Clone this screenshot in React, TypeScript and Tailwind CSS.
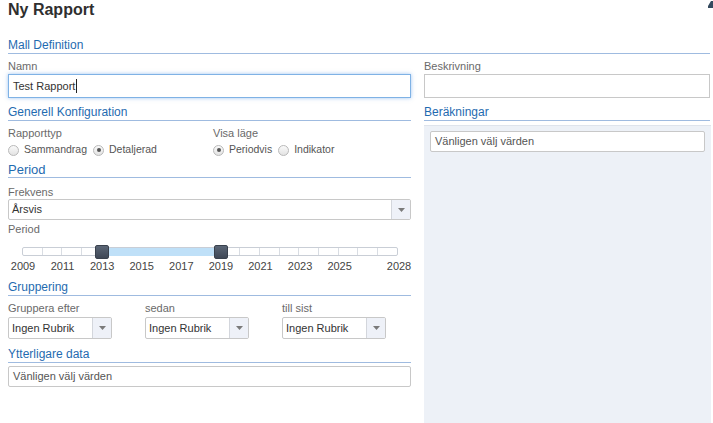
import React from "react";

const YEARS_START = 2009;
const YEARS_END = 2028;
const TRACK_W = 376;
const STEP = TRACK_W / (YEARS_END - YEARS_START);
const yearX = (y: number) => 14 + (y - YEARS_START) * STEP;

function Heading({ children, className = "" }: { children: React.ReactNode; className?: string }) {
  return (
    <div className={`h-[16px] text-[12px] leading-[15px] text-[#1f6bb0] border-b border-[#9fbbe0] ${className}`}>
      {children}
    </div>
  );
}

function Label({ children, className = "" }: { children: React.ReactNode; className?: string }) {
  return <div className={`h-[13px] text-[11px] leading-[13px] text-[#6a6a6a] ${className}`}>{children}</div>;
}

function Arrow() {
  return (
    <div className="w-[19px] self-stretch bg-[#eef1f8] border-l border-[#d3d6dc] flex items-center justify-center">
      <svg width="7" height="4" viewBox="0 0 7 4">
        <path d="M0 0 H7 L3.5 4 Z" fill="#7a7a7a" />
      </svg>
    </div>
  );
}

function Select({ value, className = "" }: { value: string; className?: string }) {
  return (
    <div className={`flex items-center bg-white border border-[#c8c8c8] rounded-[2px] overflow-hidden ${className}`}>
      <div className="flex-1 pl-[3px] text-[11px] text-[#333] truncate">{value}</div>
      <Arrow />
    </div>
  );
}

function Radio({ checked, label }: { checked?: boolean; label: string }) {
  return (
    <div className="flex items-center gap-[5px]">
      <div className="w-[11px] h-[11px] rounded-full border border-[#b9b9b9] bg-gradient-to-b from-[#fafafa] to-[#e3e3e3] flex items-center justify-center">
        {checked && <div className="w-[4px] h-[4px] rounded-full bg-[#555]" />}
      </div>
      <span className="text-[10.5px] text-[#555]">{label}</span>
    </div>
  );
}

export default function App() {
  const from = 2013;
  const to = 2019;
  const cells = Array.from({ length: YEARS_END - YEARS_START });
  const labels = [2009, 2011, 2013, 2015, 2017, 2019, 2021, 2023, 2025, 2028];

  return (
    <div
      className="w-[713px] h-[423px] overflow-hidden bg-white relative flex flex-col pl-[8px] pr-[3px]"
      style={{ fontFamily: '"Liberation Sans", Arial, sans-serif' }}
    >
      <div className="h-[20px] text-[16px] leading-[20px] font-bold text-[#2f2f2f]">Ny Rapport</div>
      <svg className="absolute right-0 top-[1px]" width="5" height="8" viewBox="0 0 5 8">
        <path d="M3 0 H5 V7 H0 V5 Z" fill="#34495e" />
      </svg>

      <Heading className="mt-[18px]">Mall Definition</Heading>

      <div className="flex-1 flex gap-[13px] min-h-0">
        {/* Left column */}
        <div className="w-[403px] shrink-0 flex flex-col">
          <Label className="mt-[6px]">Namn</Label>
          <div className="mt-[1px] h-[24px] border border-[#7fb2e5] shadow-[0_0_4px_rgba(82,150,230,0.55)] bg-white flex items-center pl-[4px] text-[11px] text-[#333]">
            Test Rapport
            <span className="inline-block w-px h-[14px] bg-[#222] ml-[1px]" />
          </div>

          <Heading className="mt-[7px]">Generell Konfiguration</Heading>
          <div className="flex">
            <div className="w-[205px] shrink-0">
              <Label className="mt-[6px]">Rapporttyp</Label>
              <div className="mt-[2px] h-[16px] flex items-center gap-[6px]">
                <Radio label="Sammandrag" />
                <Radio checked label="Detaljerad" />
              </div>
            </div>
            <div>
              <Label className="mt-[6px]">Visa läge</Label>
              <div className="mt-[2px] h-[16px] flex items-center gap-[6px]">
                <Radio checked label="Periodvis" />
                <Radio label="Indikator" />
              </div>
            </div>
          </div>

          <Heading className="mt-[4px] text-[13px]">Period</Heading>
          <Label className="mt-[8px]">Frekvens</Label>
          <Select value="Årsvis" className="h-[21px]" />
          <Label className="mt-[3px]">Period</Label>

          <div className="relative mt-[8px] h-[15px]">
            <div
              className="absolute top-[3px] h-[9px] flex border border-[#c9ced6] rounded-[2px] bg-white overflow-hidden"
              style={{ left: 14, width: TRACK_W }}
            >
              {cells.map((_, i) => (
                <div key={i} className={`flex-1 ${i < cells.length - 1 ? "border-r border-[#d9dde3]" : ""}`} />
              ))}
            </div>
            <div
              className="absolute top-[4px] h-[8px] bg-[#bfe0f8]"
              style={{ left: yearX(from) + 1, width: yearX(to) - yearX(from) }}
            />
            <div
              className="absolute top-[1px] w-[14px] h-[14px] rounded-[2px] bg-gradient-to-b from-[#5b6676] to-[#3f4856] border border-[#39414d]"
              style={{ left: yearX(from) - 6 }}
            />
            <div
              className="absolute top-[1px] w-[14px] h-[14px] rounded-[2px] bg-gradient-to-b from-[#5b6676] to-[#3f4856] border border-[#39414d]"
              style={{ left: yearX(to) - 6 }}
            />
          </div>
          <div className="relative mt-[1px] h-[13px]">
            {labels.map((y) => (
              <span
                key={y}
                className="absolute top-0 -translate-x-1/2 text-[11px] leading-[13px] text-[#444]"
                style={{ left: yearX(y) + 1 }}
              >
                {y}
              </span>
            ))}
          </div>

          <Heading className="mt-[7px]">Gruppering</Heading>
          <div className="flex">
            {["Gruppera efter", "sedan", "till sist"].map((l) => (
              <div key={l} className="w-[137px] shrink-0">
                <Label className="mt-[6px]">{l}</Label>
                <Select value="Ingen Rubrik" className="mt-[2px] h-[22px] w-[104px]" />
              </div>
            ))}
          </div>

          <Heading className="mt-[8px]">Ytterligare data</Heading>
          <div className="mt-[3px] h-[21px] border border-[#c8c8c8] rounded-[2px] bg-white flex items-center pl-[4px] text-[11px] text-[#555]">
            Vänligen välj värden
          </div>
        </div>

        {/* Right column */}
        <div className="flex-1 flex flex-col">
          <Label className="mt-[6px]">Beskrivning</Label>
          <div className="mt-[1px] h-[24px] border border-[#c8c8c8] bg-white" />
          <Heading className="mt-[7px]">Beräkningar</Heading>
          <div className="mt-[4px] flex-1 -mr-px bg-[#edf1f7] border-t border-[#dfe4ec] pt-[5px] pl-[6px] pr-[6px]">
            <div className="h-[21px] border border-[#c8c8c8] rounded-[2px] bg-white flex items-center pl-[4px] text-[11px] text-[#555]">
              Vänligen välj värden
            </div>
          </div>
        </div>
      </div>
    </div>
  );
}
